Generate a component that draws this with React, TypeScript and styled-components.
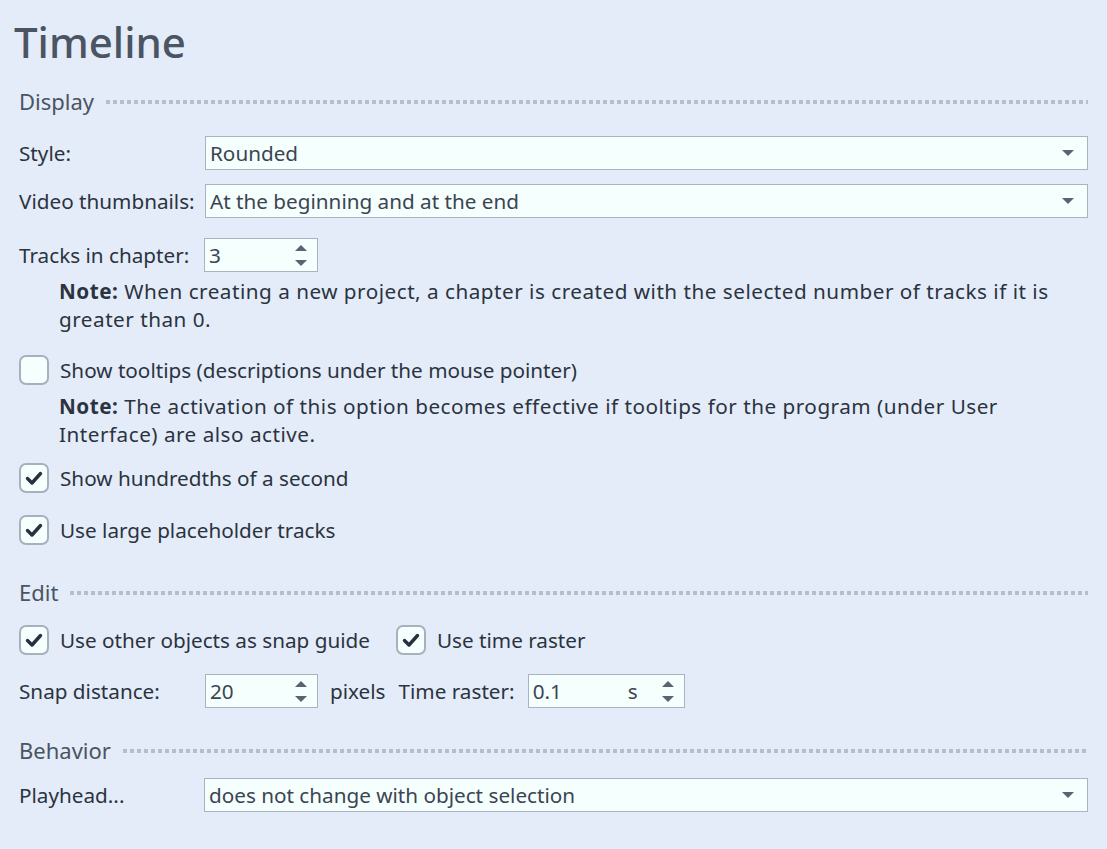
import React from "react";
import styled, { createGlobalStyle } from "styled-components";

const Global = createGlobalStyle`
  html, body { margin: 0; padding: 0; background: #e3ecf8; }
  body { font-family: "Noto Sans", "Open Sans", sans-serif; color: #2b3340; }
`;

const Page = styled.div`
  width: 1107px;
  height: 849px;
  box-sizing: border-box;
  padding: 14px 19px 0 19px;
  display: flex;
  flex-direction: column;
`;

const Title = styled.h1`
  margin: 0 0 0 -5px;
  font-size: 42px;
  font-weight: 500;
  line-height: 56px;
  color: #4b5463;
`;

const SectionHead = styled.div<{ $mt: number }>`
  display: flex;
  align-items: center;
  gap: 12px;
  margin-top: ${(p) => p.$mt}px;
  height: 28px;
  font-size: 22px;
  color: #4b5463;
`;

const Dots = styled.div`
  flex: 1;
  height: 4px;
  margin-top: 2px;
  background: repeating-linear-gradient(90deg, #b7bec8 0 4px, transparent 4px 7px);
`;

const Row = styled.div<{ $mt: number }>`
  display: flex;
  align-items: center;
  margin-top: ${(p) => p.$mt}px;
  font-size: 20.7px;
  min-height: 34px;
`;

const Label = styled.div<{ $w?: number }>`
  width: ${(p) => (p.$w ? `${p.$w}px` : "auto")};
  flex: none;
  white-space: nowrap;
`;

const Select = styled.div`
  flex: 1;
  height: 34px;
  box-sizing: border-box;
  border: 1px solid #a9b3bf;
  background: #f5fffe;
  display: flex;
  align-items: center;
  padding: 0 13px 0 4px;
  font-size: 20.7px;
  color: #3c4452;
`;

const SelectText = styled.span`
  flex: 1;
  white-space: nowrap;
`;

const Caret = styled.span`
  width: 0;
  height: 0;
  border-left: 6px solid transparent;
  border-right: 6px solid transparent;
  border-top: 6px solid #5b6370;
`;

const Spin = styled.div<{ $w: number }>`
  width: ${(p) => p.$w}px;
  height: 34px;
  box-sizing: border-box;
  border: 1px solid #a9b3bf;
  background: #f5fffe;
  display: flex;
  align-items: center;
  padding: 0 10px 0 4px;
  font-size: 20.7px;
  color: #3c4452;
`;

const SpinValue = styled.span`
  flex: 1;
`;

const Unit = styled.span`
  margin-right: 24px;
`;

const Arrows = styled.span`
  display: flex;
  flex-direction: column;
  gap: 9px;
`;

const ArrowUp = styled.span`
  width: 0;
  height: 0;
  border-left: 6px solid transparent;
  border-right: 6px solid transparent;
  border-bottom: 6px solid #5b6370;
`;

const ArrowDown = styled.span`
  width: 0;
  height: 0;
  border-left: 6px solid transparent;
  border-right: 6px solid transparent;
  border-top: 6px solid #5b6370;
`;

const Note = styled.div<{ $mt: number }>`
  margin: ${(p) => p.$mt}px 20px 0 40px;
  font-size: 20.7px;
  line-height: 28px;
  letter-spacing: 0.5px;
  color: #2b3340;
  b { font-weight: 700; }
`;

const CheckRow = styled.label<{ $mt: number }>`
  display: flex;
  align-items: center;
  gap: 11px;
  margin-top: ${(p) => p.$mt}px;
  font-size: 20.7px;
  height: 30px;
  white-space: nowrap;
`;

const CheckGroup = styled.div`
  display: flex;
  align-items: center;
  gap: 11px;
`;

const Box = styled.span`
  width: 30px;
  height: 30px;
  box-sizing: border-box;
  border: 2px solid #a8b0bc;
  border-radius: 7px;
  background: #f5fffe;
  display: flex;
  align-items: center;
  justify-content: center;
  flex: none;
`;

const Inline = styled.span<{ $ml?: number; $mr?: number }>`
  margin-left: ${(p) => p.$ml ?? 0}px;
  margin-right: ${(p) => p.$mr ?? 0}px;
  white-space: nowrap;
`;

const Check = ({ on }: { on: boolean }) => (
  <Box>
    {on && (
      <svg width="18" height="18" viewBox="0 0 18 18">
        <path d="M2.5 9.5 L7 14 L15.5 4.5" fill="none" stroke="#283040" strokeWidth="3.4" strokeLinecap="round" strokeLinejoin="round" />
      </svg>
    )}
  </Box>
);

const SpinBox = ({ w, value, unit }: { w: number; value: string; unit?: string }) => (
  <Spin $w={w}>
    <SpinValue>{value}</SpinValue>
    {unit && <Unit>{unit}</Unit>}
    <Arrows>
      <ArrowUp />
      <ArrowDown />
    </Arrows>
  </Spin>
);

export default function App() {
  return (
    <>
      <Global />
      <Page>
        <Title>Timeline</Title>
        <SectionHead $mt={17}>
          Display
          <Dots />
        </SectionHead>
        <Row $mt={21}>
          <Label $w={186}>Style:</Label>
          <Select>
            <SelectText>Rounded</SelectText>
            <Caret />
          </Select>
        </Row>
        <Row $mt={14}>
          <Label $w={186}>Video thumbnails:</Label>
          <Select>
            <SelectText>At the beginning and at the end</SelectText>
            <Caret />
          </Select>
        </Row>
        <Row $mt={20}>
          <Label $w={185}>Tracks in chapter:</Label>
          <SpinBox w={114} value="3" />
        </Row>
        <Note $mt={5}>
          <b>Note:</b> When creating a new project, a chapter is created with the selected number of tracks if it is
          greater than 0.
        </Note>
        <CheckRow $mt={22}>
          <Check on={false} />
          Show tooltips (descriptions under the mouse pointer)
        </CheckRow>
        <Note $mt={7}>
          <b>Note:</b> The activation of this option becomes effective if tooltips for the program (under User
          Interface) are also active.
        </Note>
        <CheckRow $mt={15}>
          <Check on />
          Show hundredths of a second
        </CheckRow>
        <CheckRow $mt={22}>
          <Check on />
          Use large placeholder tracks
        </CheckRow>
        <SectionHead $mt={33}>
          Edit
          <Dots />
        </SectionHead>
        <CheckRow $mt={19}>
          <CheckGroup>
            <Check on />
            <Inline $mr={15}>Use other objects as snap guide</Inline>
          </CheckGroup>
          <CheckGroup>
            <Check on />
            <Inline>Use time raster</Inline>
          </CheckGroup>
        </CheckRow>
        <Row $mt={19}>
          <Label $w={186}>Snap distance:</Label>
          <SpinBox w={113} value="20" />
          <Inline $ml={12} $mr={13}>pixels</Inline>
          <Inline $mr={13}>Time raster:</Inline>
          <SpinBox w={157} value="0.1" unit="s" />
        </Row>
        <SectionHead $mt={28}>
          Behavior
          <Dots />
        </SectionHead>
        <Row $mt={14}>
          <Label $w={185}>Playhead...</Label>
          <Select>
            <SelectText>does not change with object selection</SelectText>
            <Caret />
          </Select>
        </Row>
      </Page>
    </>
  );
}
